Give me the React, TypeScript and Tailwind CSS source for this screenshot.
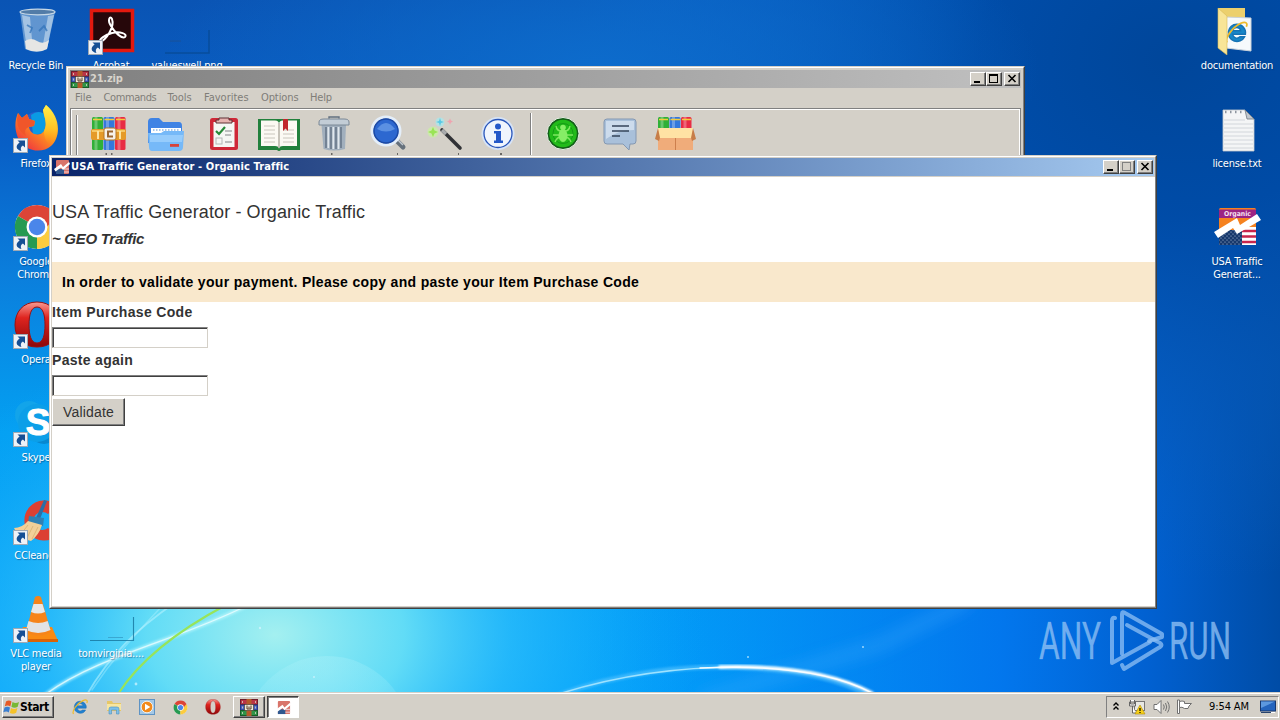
import type { ReactNode } from 'react';
import clsx from 'clsx';

const raised = 'border border-t-white border-l-white border-r-[#404040] border-b-[#404040]';

/* ---------- Wallpaper ---------- */

const Wallpaper = () => (
  <svg className="absolute inset-0" width="1280" height="720" viewBox="0 0 1280 720">
    <defs>
      <linearGradient id="sky" x1="0" y1="0" x2="0" y2="1">
        <stop offset="0" stopColor="#0a54b4" />
        <stop offset="0.2" stopColor="#085fc6" />
        <stop offset="0.38" stopColor="#0b7edc" />
        <stop offset="0.6" stopColor="#03a0f2" />
        <stop offset="0.96" stopColor="#02a4fb" />
      </linearGradient>
      <linearGradient id="right" x1="0" y1="0" x2="1" y2="0">
        <stop offset="0.45" stopColor="#0478f0" stopOpacity="0" />
        <stop offset="0.78" stopColor="#0272ec" stopOpacity="0.9" />
        <stop offset="0.9" stopColor="#0160d0" />
        <stop offset="1" stopColor="#004ca6" />
      </linearGradient>
      <radialGradient id="top" cx="0" cy="0" r="1" gradientUnits="userSpaceOnUse" gradientTransform="translate(1170 60) scale(640 520)">
        <stop offset="0" stopColor="#00469a" />
        <stop offset="0.3" stopColor="#004ba6" stopOpacity="0.96" />
        <stop offset="0.6" stopColor="#0556b4" stopOpacity="0.7" />
        <stop offset="1" stopColor="#0a60c0" stopOpacity="0" />
      </radialGradient>
      <radialGradient id="topglow" cx="0" cy="0" r="1" gradientUnits="userSpaceOnUse" gradientTransform="translate(600 70) scale(440 180)">
        <stop offset="0" stopColor="#0d6ccc" />
        <stop offset="1" stopColor="#0d6ccc" stopOpacity="0" />
      </radialGradient>
      <radialGradient id="glow" cx="0" cy="0" r="1" gradientUnits="userSpaceOnUse" gradientTransform="translate(275 635) scale(430 300)">
        <stop offset="0" stopColor="#a4f0f0" />
        <stop offset="0.3" stopColor="#6ce2f6" stopOpacity="0.9" />
        <stop offset="0.55" stopColor="#38c4fb" stopOpacity="0.6" />
        <stop offset="1" stopColor="#10a4fa" stopOpacity="0" />
      </radialGradient>
      <radialGradient id="bubble" cx="0.5" cy="0.1" r="0.8">
        <stop offset="0" stopColor="#b8f4fc" stopOpacity="0.3" />
        <stop offset="1" stopColor="#b8f4fc" stopOpacity="0.05" />
      </radialGradient>
      <filter id="soft">
        <feGaussianBlur stdDeviation="1.2" />
      </filter>
      <filter id="softer">
        <feGaussianBlur stdDeviation="7" />
      </filter>
    </defs>
    <rect width="1280" height="720" fill="url(#sky)" />
    <rect width="1280" height="720" fill="url(#right)" />
    <rect width="1280" height="720" fill="url(#top)" />
    <rect width="1280" height="300" fill="url(#topglow)" />
    <rect y="330" width="800" height="390" fill="url(#glow)" />
    <circle cx="327" cy="740" r="84" fill="url(#bubble)" />
    <path d="M970 600 L880 645 L700 700" fill="none" stroke="#4ab4ff" strokeOpacity="0.25" strokeWidth="14" filter="url(#softer)" />
    <g fill="none" strokeLinecap="round">
      <path d="M46 694 C100 655 180 640 250 604" stroke="#c8fbff" strokeOpacity="0.6" strokeWidth="4" filter="url(#soft)" />
      <path d="M46 694 C100 655 180 640 250 604" stroke="#effeff" strokeOpacity="0.75" strokeWidth="1.4" />
      <path d="M86 696 C110 655 135 630 176 602" stroke="#b4f2ff" strokeOpacity="0.6" strokeWidth="1.8" />
      <path d="M92 690 C112 660 130 640 164 604" stroke="#b4f2ff" strokeOpacity="0.4" strokeWidth="1.5" />
      <path d="M118 694 C140 660 175 632 226 605" stroke="#98e458" strokeWidth="2.2" />
      <path d="M556 696 C620 672 690 664 750 668 C800 670 840 680 866 694" stroke="#58c4ff" strokeOpacity="0.6" strokeWidth="5" filter="url(#soft)" />
      <path d="M562 693 C620 675 680 667 740 667" stroke="#9de2ff" strokeWidth="1.4" />
      <path d="M720 667 C790 665 840 676 872 693" stroke="#f2fcff" strokeWidth="3.4" filter="url(#soft)" />
      <path d="M700 668 C790 664 840 676 872 693" stroke="#ffffff" strokeOpacity="0.9" strokeWidth="1.3" />
    </g>
    <g fill="#d8f6ff" fillOpacity="0.7">
      <circle cx="136" cy="684" r="1.4" />
      <circle cx="260" cy="628" r="1.2" />
      <circle cx="314" cy="677" r="1" />
      <circle cx="748" cy="657" r="1" />
      <circle cx="863" cy="647" r="1" />
    </g>
  </svg>
);

const AnyRun = () => (
  <svg className="absolute left-[1030px] top-[600px] overflow-visible" width="220" height="84" viewBox="1030 600 220 84">
    <g fill="#8fc0f4" fillOpacity="0.78" stroke="#8fc0f4" strokeOpacity="0.5" strokeWidth="0.5" fontFamily="Roboto, Liberation Sans, sans-serif" fontSize="52">
      <text x="1039" y="659" textLength="62" lengthAdjust="spacingAndGlyphs">ANY</text>
      <text x="1169" y="659" textLength="62" lengthAdjust="spacingAndGlyphs">RUN</text>
    </g>
    <g fill="none" stroke="#8fc0f4" strokeOpacity="0.75" strokeWidth="4" strokeLinecap="round" strokeLinejoin="round">
      <path d="M1115 618 Q1112 617 1112 621 V663 L1150 642" />
      <path d="M1122 654 V614 Q1122 611 1125 613 L1162 634 V637 L1149 641" />
      <path d="M1127 625 L1160 643 Q1163 645 1160 647 L1124 669 L1122 665" />
    </g>
  </svg>
);

/* ---------- Icons ---------- */

const Shortcut = () => (
  <svg className="absolute bottom-0 left-0" width="15" height="15" viewBox="0 0 15 15">
    <rect x="0.5" y="0.5" width="14" height="14" fill="#eef2f7" stroke="#9fa9b4" />
    <path d="M4.5 2.5 H12 V9.5 L9.9 7.6 C7.8 8.8 7.2 10.4 8.4 13 C3 12 2 7.8 6.6 4.6 Z" fill="#164f94" />
  </svg>
);

const BinIcon = () => (
  <svg width="48" height="48" viewBox="0 0 48 48">
    <path d="M7 5 L12 42 Q24 48 34 42 L42 5 Z" fill="#86b0da" fillOpacity="0.7" />
    <path d="M9 8 L14 42 L20 44 L17 10 Z" fill="#e7f1f8" fillOpacity="0.5" />
    <path d="M35 9 L29 43 L34 41 L41 8 Z" fill="#d6e6f3" fillOpacity="0.55" />
    <path d="M12 34 Q18 30 24 34 T36 33 L34 42 Q24 47 13 42 Z" fill="#e6e6e4" />
    <path d="M14 18 l5 3 l-2 5 M26 24 l5 -5 l3 5" stroke="#2d70b8" strokeOpacity="0.7" strokeWidth="1.8" fill="none" />
    <ellipse cx="24.5" cy="5" rx="17.5" ry="2.8" fill="#527ca8" stroke="#c7d8e6" strokeWidth="1.2" />
  </svg>
);

const AcrobatIcon = () => (
  <svg width="48" height="48" viewBox="0 0 48 48">
    <rect x="3.5" y="3.5" width="41" height="40" fill="#26070a" stroke="#e2190f" strokeWidth="3.5" />
    <path
      d="M12 35 C18 33 27 20 24 12 C22 8 19 13 23 19 C27 26 34 32 37 30 C40 27 32 24 24 26 C17 28 11 32 12 35 Z"
      fill="none"
      stroke="#fff"
      strokeWidth="2"
    />
  </svg>
);

const FirefoxIcon = () => (
  <svg width="48" height="48" viewBox="0 0 48 48">
    <defs>
      <linearGradient id="ff" x1="0.9" y1="0" x2="0.1" y2="1">
        <stop offset="0" stopColor="#ffe63a" />
        <stop offset="0.45" stopColor="#ff9a1b" />
        <stop offset="1" stopColor="#ec2048" />
      </linearGradient>
      <linearGradient id="fftail" x1="0" y1="0" x2="0" y2="1">
        <stop offset="0" stopColor="#fff04a" />
        <stop offset="0.6" stopColor="#ffc524" stopOpacity="0.9" />
        <stop offset="1" stopColor="#ff9a1b" stopOpacity="0" />
      </linearGradient>
    </defs>
    <circle cx="24" cy="22" r="15" fill="#2a5fcb" />
    <path d="M18 10 Q27 3 34 12 L31 28 L20 30 Z" fill="#0a9be4" />
    <path
      d="M5 8 L9 13 L14 9 L16 14 L22 16 L21 21 L16 22 C17 30 27 32 31 26 C35 18 31 12 30 5 L33 0 C48 12 48 32 38 41 C28 50 10 45 5 33 C1 23 2 15 5 8 Z"
      fill="url(#ff)"
    />
    <path d="M33 0 C46 12 47 28 38 40 C33 38 31 32 31 26 C35 18 31 12 30 5 Z" fill="url(#fftail)" />
    <path d="M5 8 L9 13 L14 9 L16 14 L22 16 L21 21 L16 22 Q10 24 13 31 Q4 26 4 14 Z" fill="#f0562a" />
  </svg>
);

const ChromeIcon = ({ size = 48 }: { size?: number }) => (
  <svg width={size} height={size} viewBox="0 0 48 48">
    <circle cx="24" cy="24" r="22" fill="#fff" />
    <path d="M24 24 L4.9 13 A22 22 0 0 1 43.1 13 Z" fill="#dc4437" />
    <path d="M24 24 L4.9 13 A22 22 0 0 0 24 46 Z" fill="#269a52" />
    <path d="M24 24 L43.1 13 A22 22 0 0 1 24 46 Z" fill="#fccc3f" />
    <path d="M24 13 H43.1 L33 25 Z" fill="#dc4437" />
    <path d="M24 46 L34 29 L25 34 Z" fill="#fccc3f" />
    <circle cx="24" cy="24" r="10.5" fill="#fff" />
    <circle cx="24" cy="24" r="8.2" fill="#4a86ea" />
  </svg>
);

const OperaIcon = ({ size = 48 }: { size?: number }) => (
  <svg width={size} height={size} viewBox="0 0 48 48">
    <defs>
      <linearGradient id="op" x1="0" y1="0" x2="0" y2="1">
        <stop offset="0" stopColor="#f79a92" />
        <stop offset="0.35" stopColor="#df241f" />
        <stop offset="1" stopColor="#8c0709" />
      </linearGradient>
    </defs>
    <path
      d="M24 1 C10 1 2 11 2 24 C2 38 11 46 24 46 C37 46 46 38 46 24 C46 11 38 1 24 1 Z M24 6 C30 6 32 14 32 24 C32 34 30 42 24 42 C18 42 16 34 16 24 C16 14 18 6 24 6 Z"
      fill="url(#op)"
      fillRule="evenodd"
      stroke="#991112"
    />
  </svg>
);

const SkypeIcon = () => (
  <svg width="48" height="48" viewBox="0 0 48 48">
    <circle cx="16" cy="16" r="14" fill="#12a4ea" />
    <circle cx="31" cy="30" r="15" fill="#0788d0" />
    <circle cx="24" cy="24" r="19" fill="#0c9fe8" />
    <text x="25" y="36" textAnchor="middle" fontFamily="Liberation Sans, sans-serif" fontWeight="bold" fontSize="37" fill="#fff" stroke="#fff">S</text>
  </svg>
);

const CCleanerIcon = () => (
  <svg width="48" height="48" viewBox="0 0 48 48">
    <path d="M44 8 A20 20 0 1 0 44 39 L35 31 A9 9 0 1 1 35 17 Z" fill="#dc4033" />
    <path d="M31 3 L34 4 L27 22 L23 21 Z" fill="#2a6fa8" />
    <path d="M16 19 L31 21 L30 29 L15 27 Z" fill="#2f80b4" />
    <path d="M15 24 L29 28 Q26 38 18 44 Q5 42 1 31 Q9 31 15 24 Z" fill="#f2cf98" />
    <path d="M15 28 L8 37 M20 29 L14 41 M25 30 L19 42" stroke="#d9ae70" strokeWidth="0.8" />
  </svg>
);

const VlcIcon = () => (
  <svg width="48" height="48" viewBox="0 0 48 48">
    <path d="M10 32 H39 L45 46 H4 Z" fill="#f98a12" />
    <path d="M4 44 H45 L45 47 H4 Z" fill="#d96307" />
    <path d="M22 2 Q25 0 28 2 L38 37 Q25 44 13 37 Z" fill="#f6841a" />
    <path d="M20.5 9 H29.5 L32 17 Q25 20 18 17 Z" fill="#e8e8e8" />
    <path d="M15.5 26 Q25 30 34.7 26 L37.5 35 Q25 41 13 35 Z" fill="#e2e3e4" />
  </svg>
);

const IeIcon = ({ size = 16 }: { size?: number }) => (
  <svg width={size} height={size} viewBox="0 0 16 16">
    <path d="M8.2 2.2 A6 6 0 1 0 13.6 11 H10.4 A3 3 0 0 1 5.3 9.2 H14.2 A6 6 0 0 0 8.2 2.2 Z M5.4 6.8 A2.8 2.8 0 0 1 10.9 6.8 Z" fill="#2181cf" stroke="#1a6ab4" strokeWidth="0.5" fillRule="evenodd" />
    <path d="M1.5 15 C-0.5 12 5 4.5 11 1.6 C14.5 0 16 1.6 14.8 4" fill="none" stroke="#eebb2b" strokeWidth="1.2" />
  </svg>
);

const DocumentationIcon = () => (
  <svg width="48" height="48" viewBox="0 0 48 48">
    <path d="M4 1 H31 V40 H4 Z" fill="#ecd06d" />
    <path d="M12 10 L37 11 V44 L12 41 Z" fill="#f6fafc" stroke="#c9d2da" />
    <svg x="11" y="14" width="23" height="23" viewBox="0 0 16 16">
      <path d="M8.2 2.2 A6 6 0 1 0 13.6 11 H10.4 A3 3 0 0 1 5.3 9.2 H14.2 A6 6 0 0 0 8.2 2.2 Z M5.4 6.8 A2.8 2.8 0 0 1 10.9 6.8 Z" fill="#1687c8" stroke="#1673b4" fillRule="evenodd" />
      <path d="M1.5 15 C-0.5 12 5 4.5 11 1.6 C14.5 0 16 1.6 14.8 4" fill="none" stroke="#eebb2b" strokeWidth="1.2" />
    </svg>
    <path d="M4 1 L13 9 V48 L4 41 Z" fill="#f8e597" stroke="#d9b955" strokeWidth="0.6" />
  </svg>
);

const TextFileIcon = () => (
  <svg width="48" height="48" viewBox="0 0 48 48">
    <path d="M9 5 H31 L40 14 V46 H9 Z" fill="#f4f5f6" stroke="#c4c9cf" strokeWidth="0.8" />
    <path d="M31 5 L33 14 H40 Z" fill="#c2c8cf" stroke="#6f7782" strokeWidth="0.8" />
    <path d="M10 15 H31 M10 19 H39 M10 23 H39 M10 27 H39 M10 31 H39 M10 35 H39 M10 39 H39 M10 43 H39" stroke="#d2d6db" />
    <path d="M11 7 H30" stroke="#8e969f" strokeWidth="2.5" strokeDasharray="1.5 3.5" />
  </svg>
);

const OrganicIcon = () => (
  <svg width="48" height="48" viewBox="0 0 48 48">
    <defs>
      <pattern id="stars" width="4" height="4" patternUnits="userSpaceOnUse">
        <rect width="4" height="4" fill="#17386c" />
        <circle cx="1" cy="1" r="0.6" fill="#b9cbe2" />
        <circle cx="3" cy="3" r="0.6" fill="#b9cbe2" />
      </pattern>
    </defs>
    <rect x="5" y="5" width="37" height="26" rx="1.5" fill="#f58220" />
    <rect x="5" y="6.5" width="37" height="8.5" fill="#9c2383" />
    <rect x="5" y="27" width="23" height="15" fill="url(#stars)" />
    <rect x="28" y="24" width="14" height="18" fill="#fff" />
    <path d="M28 28 H42 M28 33.5 H42 M28 39 H42" stroke="#c8254c" strokeWidth="2.4" />
    <path d="M0 29 L23 15 L26 22 L43 11 L47 17 L23 31 L19 25 L4 35 Z" fill="#fff" />
    <text x="10" y="13.3" fontFamily="DejaVu Sans, sans-serif" fontWeight="bold" fontSize="6.8" textLength="27" lengthAdjust="spacingAndGlyphs" fill="#f6e2f2">Organic</text>
  </svg>
);

const TrafficIcon = ({ size = 16 }: { size?: number }) => (
  <svg width={size} height={size} viewBox="0 0 16 16">
    <rect x="2" y="1" width="13" height="14" rx="1" fill="#d9746a" />
    <rect x="2" y="10" width="8" height="5" fill="#31588f" />
    <path d="M10 10 H15 M10 13 H15" stroke="#f1d6da" />
    <path d="M0 10 L7 5 L9 8 L15 3 L16 5 L9 11 L7 8.5 L1.5 12.5 Z" fill="#fff" />
  </svg>
);

const ValueswellIcon = () => (
  <svg width="48" height="48" viewBox="0 0 48 48">
    <path d="M1 46 H45 V23" fill="none" stroke="#084a94" strokeOpacity="0.8" strokeWidth="1.5" />
    <path d="M6 34 H17" stroke="#244f80" strokeOpacity="0.6" />
  </svg>
);

const TomIcon = () => (
  <svg width="48" height="48" viewBox="0 0 48 48">
    <path d="M2 45.5 H45.5 V22" fill="none" stroke="#15749c" strokeOpacity="0.8" strokeWidth="1.1" />
    <path d="M20 42.5 H35" stroke="#3aa8d2" />
  </svg>
);

const RarIcon = () => (
  <svg width="18" height="17" viewBox="0 0 18 17">
    <rect x="0.5" y="0.5" width="17" height="5" fill="#b83446" stroke="#6e1c2a" />
    <rect x="0.5" y="6" width="17" height="5" fill="#4560c0" stroke="#263684" />
    <rect x="0.5" y="11.5" width="17" height="5" fill="#2f9448" stroke="#185c28" />
    <rect x="6.5" y="0" width="5" height="17" fill="#b65a2a" />
    <rect x="4.5" y="5.5" width="9" height="6" fill="#ede8d8" stroke="#403020" strokeWidth="0.6" />
    <path d="M7 6.5 V10 H11 V6.5 M9 7.5 V9.5" stroke="#5a3b24" fill="none" />
    <path d="M2.5 2 V15 M15.5 2 V15" stroke="#d8d4c4" strokeOpacity="0.8" strokeDasharray="2 3.5" />
  </svg>
);

/* ---------- WinRAR toolbar ---------- */

const Books = ({ y = 4, h = 33 }: { y?: number; h?: number }) => (
  <>
    <rect x="3" y={y} width="11" height={h} rx="1.5" fill="#30b038" />
    <rect x="14.5" y={y} width="11" height={h} rx="1.5" fill="#3478dc" />
    <rect x="26" y={y} width="10.5" height={h} rx="1.5" fill="#e82c44" />
    <path d={`M7 ${y} V${y + h} M18.5 ${y} V${y + h} M30 ${y} V${y + h}`} stroke="#fff" strokeOpacity="0.28" strokeWidth="3" />
    <path d={`M4 ${y + 2.5} H13 M15.5 ${y + 2.5} H25 M27 ${y + 2.5} H36`} stroke="#f4cc3c" strokeWidth="1.6" />
  </>
);

const tools: { name: string; className: string; icon: ReactNode }[] = [
  {
    name: 'add',
    className: 'ml-[11px]',
    icon: (
      <>
        <Books />
        <rect x="2" y="16" width="35" height="11" rx="2" fill="#e59a28" />
        <path d="M3 18 H36" stroke="#fbd778" strokeWidth="1.6" />
        <path d="M9 18 V26 M31 18 V26" stroke="#fbe3a0" strokeWidth="2" />
        <rect x="15" y="15" width="12" height="12" rx="2" fill="#f6f2ea" stroke="#b67725" />
        <path d="M24 18.5 H19 V23.5 H24" fill="none" stroke="#9b6630" strokeWidth="2" />
        <path d="M16.5 41 H18 M22 41 H23.5" stroke="#000" />
      </>
    ),
  },
  {
    name: 'extract',
    className: 'ml-[17px]',
    icon: (
      <>
        <path d="M2 9 Q2 5 6 5 H13 L17 9 H33 Q36 9 36 13 V30 H2 Z" fill="#3f83e4" />
        <path d="M5 15 H35 V22 H5 Z" fill="#fff" />
        <path d="M7 17 H34" stroke="#a8c8ea" strokeWidth="2" strokeDasharray="1.5 1.5" />
        <path d="M2 20 H15 L18 18 H38 L37 34 Q37 38 33 38 H6 Q3 38 3 34 Z" fill="#76b9f8" />
        <path d="M4 22 H37 L36 29 H4 Z" fill="#a4d4fd" fillOpacity="0.7" />
        <rect x="24" y="31" width="9" height="2.8" fill="#d8433a" />
      </>
    ),
  },
  {
    name: 'test',
    className: 'ml-[18px]',
    icon: (
      <>
        <rect x="6" y="5" width="28" height="32" rx="2.5" fill="#cf2838" />
        <rect x="9.5" y="9" width="21" height="25" fill="#f5f7f4" />
        <path d="M12 10 V7 H15 V5 H25 V7 H28 V10 Z" fill="#e6b3b0" stroke="#5f3035" />
        <path d="M12 18 L15 21 L21 14" fill="none" stroke="#268a38" strokeWidth="2.2" />
        <path d="M21 18 H28 M21 22 H27 M21 29 H28" stroke="#a9adad" strokeWidth="1.3" />
        <rect x="12" y="25" width="6" height="6" fill="none" stroke="#b4b8b8" />
      </>
    ),
  },
  {
    name: 'view',
    className: 'ml-[15px]',
    icon: (
      <>
        <path d="M-1 6 H41 V37 H22 Q20 39 18 37 H-1 Z" fill="#21803c" />
        <path d="M2 7.5 H16 Q20 7.5 20 11 Q20 7.5 24 7.5 H38 V33 H24 Q20 33 20 36 Q20 33 16 33 H2 Z" fill="#fbf9f3" />
        <path d="M20 10 V35" stroke="#b9b5aa" strokeWidth="1.6" />
        <path d="M5 13 H16 M5 17 H16 M5 21 H16 M5 25 H16 M5 29 H16 M24 17 H35 M24 21 H35 M24 25 H35 M24 29 H35" stroke="#c9c6bd" />
        <path d="M24 6 H29 V18 L26.5 15.5 L24 18 Z" fill="#c1272d" />
      </>
    ),
  },
  {
    name: 'delete',
    className: 'ml-[15px]',
    icon: (
      <>
        <path d="M7.5 12 H32 L31 36 Q20 39 9.5 36 Z" fill="#a1afbd" />
        <path d="M12 14 V35 M17 14 V36 M22 14 V36 M27 14 V35" stroke="#617183" strokeWidth="1.4" />
        <path d="M14.3 14 V35 M19.3 14 V36 M24.5 14 V36" stroke="#e0e7ed" strokeWidth="1.6" />
        <path d="M5 9 Q5 6 10 6 H30 Q35 6 35 9 V12 H5 Z" fill="#c3cdd6" stroke="#7b8896" />
        <path d="M15 5.5 V4 H25 V5.5" fill="none" stroke="#627080" strokeWidth="1.4" />
        <path d="M17 41 H18.5" stroke="#000" />
      </>
    ),
  },
  {
    name: 'find',
    className: 'ml-[14px]',
    icon: (
      <>
        <path d="M28 27 L35 34" stroke="#66717c" strokeWidth="5" strokeLinecap="round" />
        <path d="M28 25 L35 32" stroke="#c0c8d0" strokeWidth="1.5" />
        <circle cx="18" cy="18" r="14" fill="#2d68d0" stroke="#e4eef9" strokeWidth="3" />
        <circle cx="18" cy="18" r="12" fill="none" stroke="#1d4aa4" strokeWidth="1.4" />
        <path d="M9 16 Q18 4 27 16 Q18 21 9 16 Z" fill="#79abef" fillOpacity="0.6" />
        <path d="M29 41 H30" stroke="#000" />
      </>
    ),
  },
  {
    name: 'wizard',
    className: 'ml-[18px]',
    icon: (
      <>
        <path d="M16 17 L34 35" stroke="#303236" strokeWidth="3.6" strokeLinecap="round" />
        <path d="M16 17 L20 21" stroke="#a9abad" strokeWidth="3.4" />
        <circle cx="7" cy="19" r="5.5" fill="#c7f49c" fillOpacity="0.7" />
        <path d="M7 14 L8.5 17.5 L12 19 L8.5 20.5 L7 24 L5.5 20.5 L2 19 L5.5 17.5 Z" fill="#9ae456" />
        <circle cx="14" cy="9" r="4.5" fill="#a5e9f0" fillOpacity="0.7" />
        <path d="M14 5 L15 8 L18 9 L15 10 L14 13 L13 10 L10 9 L13 8 Z" fill="#58c8e4" />
        <path d="M24 5.5 L25 7.5 L27 8.5 L25 9.5 L24 11.5 L23 9.5 L21 8.5 L23 7.5 Z" fill="#efa4b0" />
        <path d="M32 41 H33" stroke="#000" />
      </>
    ),
  },
  {
    name: 'info',
    className: 'ml-[12px]',
    icon: (
      <>
        <circle cx="20" cy="20.5" r="16.5" fill="#d6e3f6" />
        <circle cx="20" cy="20.5" r="14" fill="#f0f5fd" stroke="#2855ba" strokeWidth="1.3" />
        <circle cx="20" cy="13.5" r="3" fill="#2458c8" />
        <path d="M16 18 H23 V27.5 H25 V30 H16 V27.5 H18 V20.5 H16 Z" fill="#2458c8" />
        <path d="M22 41 H24" stroke="#000" />
      </>
    ),
  },
  {
    name: 'scan',
    className: 'ml-[11px]',
    icon: (
      <>
        <circle cx="20" cy="20.5" r="16" fill="#155e1a" stroke="#e9eee6" />
        <circle cx="20" cy="20.5" r="13.8" fill="#22bb1a" />
        <circle cx="20" cy="20.5" r="10" fill="none" stroke="#159a16" />
        <path d="M13 13 Q14 18 18 18 M27 13 Q26 18 22 18 M10 22 H30 M12 29 Q14 24 18 24 M28 29 Q26 24 22 24" fill="none" stroke="#7fe860" strokeWidth="1.4" />
        <ellipse cx="20" cy="22.5" rx="4.5" ry="6.5" fill="#86ee66" />
        <circle cx="20" cy="14.5" r="2.8" fill="#86ee66" />
      </>
    ),
  },
  {
    name: 'comment',
    className: 'ml-[17px]',
    icon: (
      <>
        <path d="M7 6 H33 Q36 6 36 9 V28 Q36 31 33 31 H30 L29 37 L23 31 H7 Q4 31 4 28 V9 Q4 6 7 6 Z" fill="#a9c0da" stroke="#8498b2" />
        <path d="M6 8 H34 V17 Q18 17 6 26 Z" fill="#dbe7f3" fillOpacity="0.7" />
        <path d="M12 13 H29 M12 18 H29 M12 23 H20" stroke="#35445a" strokeWidth="1.5" />
      </>
    ),
  },
  {
    name: 'sfx',
    className: 'ml-[15px]',
    icon: (
      <>
        <Books y={4} h={14} />
        <path d="M3 16 H38 V37 H3 Z" fill="#f0ac7a" />
        <path d="M3 15 L0 26 L4 28 L7 18 M38 15 L41 26 L37 28 L34 18" fill="#c77d48" />
        <path d="M3 15 H38 L36 25 H5 Z" fill="#ffe2a4" />
        <path d="M20.5 25 V37" stroke="#cd7f4d" />
      </>
    ),
  },
];

/* ---------- Window parts ---------- */

const CaptionButton = ({ kind, disabled = false }: { kind: 'min' | 'max' | 'close'; disabled?: boolean }) => (
  <button className={clsx('h-[14px] w-4 bg-[#d4d0c8] shadow-[inset_-1px_-1px_0_#808080]', raised, kind === 'close' && 'ml-0.5')}>
    <svg width="14" height="12" viewBox="0 0 14 12" shapeRendering="crispEdges">
      {kind === 'min' && <path d="M3 9 H9" stroke="#000" strokeWidth="2" />}
      {kind === 'max' && (
        <g fill="none" stroke={disabled ? '#808080' : '#000'}>
          <path d="M2 1.5 H11" strokeWidth={disabled ? 1 : 2} />
          <rect x="2.5" y="1.5" width="8" height="8" />
        </g>
      )}
      {kind === 'close' && <path d="M3.5 2 L10.5 9 M10.5 2 L3.5 9" stroke="#000" strokeWidth="1.6" shapeRendering="auto" />}
    </svg>
  </button>
);

const TitleBar = ({ icon, title, className, disabled }: { icon: ReactNode; title: string; className: string; disabled?: boolean }) => (
  <div className={clsx('flex h-[18px] items-center bg-linear-to-r pr-px text-[11px] font-bold', className)}>
    {icon}
    <span className="flex-1 whitespace-nowrap leading-[18px]">{title}</span>
    <CaptionButton kind="min" />
    <CaptionButton kind="max" disabled={disabled} />
    <CaptionButton kind="close" />
  </div>
);

const menu = [
  { label: 'File', className: 'w-[28.5px]' },
  { label: 'Commands', className: 'w-16 tracking-[-0.4px]' },
  { label: 'Tools', className: 'w-[36.5px]' },
  { label: 'Favorites', className: 'w-[57px]' },
  { label: 'Options', className: 'w-[49px] tracking-[-0.1px]' },
  { label: 'Help', className: 'w-8 tracking-[-0.2px]' },
];

const ArchiveWindow = () => (
  <div className="absolute left-[66px] top-[66px] h-[400px] w-[959px] border border-[#d4d0c8] border-r-[#404040] bg-[#d4d0c8]">
    <div className="h-full border border-white border-r-[#808080] p-0.5">
      <TitleBar
        icon={<span className="pl-px pr-px"><RarIcon /></span>}
        title="21.zip"
        className="from-[#808080] to-[#c0c0c0] tracking-[-0.2px] text-[#d8d4cc]"
      />
      <div className="flex h-5 items-center pl-[5px] text-[11px] text-[#7f7d78]">
        {menu.map((m) => (
          <span key={m.label} className={m.className}>{m.label}</span>
        ))}
      </div>
      <div className="h-[280px] border border-[#808080] shadow-[inset_1px_1px_0_#fff,inset_-1px_0_0_#fff]">
        <div className="flex h-[46px] items-start pl-[5px] pt-1">
          <div className="mt-0.5 h-10 w-0.5 border-l border-[#808080] bg-white" />
          {tools.map((tool) => (
            <div key={tool.name} className="flex">
              {tool.name === 'scan' && <div className="ml-3 h-11 w-0.5 border-l border-[#808080] bg-white" />}
              <svg className={clsx('overflow-visible', tool.className)} width="40" height="40" viewBox="0 0 40 40">{tool.icon}</svg>
            </div>
          ))}
        </div>
      </div>
    </div>
  </div>
);

const CodeInput = () => (
  <input className="block h-[21px] w-[156px] border border-[#d4d0c8] border-l-[#808080] border-t-[#808080] bg-white shadow-[inset_1px_1px_0_#404040] outline-none" />
);

const TrafficWindow = () => (
  <div className="absolute left-[49px] top-[155px] h-[454px] w-[1108px] border border-[#d4d0c8] border-b-[#404040] border-r-[#404040]">
    <div className="flex h-full flex-col border border-b-[#808080] border-l-white border-r-[#808080] border-t-white bg-[#d4d0c8] p-px">
      <TitleBar
        icon={<span className="pl-0.5 pr-px"><TrafficIcon /></span>}
        title="USA Traffic Generator - Organic Traffic"
        className="from-[#0a246a] to-[#a6caf0] tracking-[0.11px] text-white"
        disabled
      />
      <div className="-mr-px mt-px flex-1 bg-white font-['Liberation_Sans',Arial,sans-serif] text-[14px] text-[#333]">
        <h1 className="pt-[23px] text-[18px] leading-6 tracking-[0.12px] text-[#333]">USA Traffic Generator - Organic Traffic</h1>
        <h2 className="mt-[5px] text-[15px] font-bold italic leading-5 tracking-[-0.28px]">~ GEO Traffic</h2>
        <div className="mt-[13px] flex h-10 items-center bg-[#f9e8cc] pl-2.5 font-bold tracking-[0.32px] text-black">
          In order to validate your payment. Please copy and paste your Item Purchase Code
        </div>
        <label className="block h-[25px] font-bold leading-5 tracking-[0.33px]">Item Purchase Code</label>
        <CodeInput />
        <label className="block h-[27px] pt-0.5 font-bold leading-5 tracking-[0.3px]">Paste again</label>
        <CodeInput />
        <button className={clsx('mt-0.5 block h-7 w-[73px] bg-[#d4d0c8] tracking-[0.2px] shadow-[inset_-1px_-1px_0_#808080]', raised)}>Validate</button>
      </div>
    </div>
  </div>
);

/* ---------- Desktop ---------- */

type Item = { label: string; icon: ReactNode; shortcut?: boolean };

const DesktopIcon = ({ label, icon, shortcut }: Item) => (
  <div className="flex h-[98px] w-20 flex-col items-center pt-[7px]">
    <div className="relative ml-0.5 h-12 w-12">
      {icon}
      {shortcut && <Shortcut />}
    </div>
    <span className="mt-1 whitespace-pre text-center text-[11px] leading-[13px] tracking-[-0.2px] text-white [text-shadow:1px_1px_1px_#00306080]">{label}</span>
  </div>
);

const leftIcons: Item[] = [
  { label: 'Recycle Bin', icon: <BinIcon /> },
  { label: 'Firefox', icon: <FirefoxIcon />, shortcut: true },
  { label: 'Google\nChrome', icon: <ChromeIcon />, shortcut: true },
  { label: 'Opera', icon: <OperaIcon />, shortcut: true },
  { label: 'Skype', icon: <SkypeIcon />, shortcut: true },
  { label: 'CCleaner', icon: <CCleanerIcon />, shortcut: true },
  { label: 'VLC media\nplayer', icon: <VlcIcon />, shortcut: true },
];

const rightIcons: Item[] = [
  { label: 'documentation', icon: <DocumentationIcon /> },
  { label: 'license.txt', icon: <TextFileIcon /> },
  { label: 'USA Traffic\nGenerat...', icon: <OrganicIcon /> },
];

/* ---------- Taskbar ---------- */

const ExplorerIcon = () => (
  <svg width="16" height="16" viewBox="0 0 16 16">
    <path d="M1 2 H6 L7 4 H15 V12 H1 Z" fill="#e7c766" />
    <path d="M1 5 H15 V11 H1 Z" fill="#f8e6a0" />
    <path d="M3 15 V10 Q3 8 5 8 H11 Q13 8 13 10 V15 H10.5 V11 H5.5 V15 Z" fill="#7fc0e8" stroke="#4a90c0" strokeWidth="0.6" />
  </svg>
);

const MediaIcon = () => (
  <svg width="16" height="16" viewBox="0 0 16 16">
    <rect x="0.5" y="0.5" width="15" height="15" fill="#a4c8e6" stroke="#5e93c4" />
    <circle cx="8" cy="8" r="5.8" fill="#f28a1c" stroke="#fff" strokeWidth="0.8" />
    <path d="M6 4.8 L11.3 8 L6 11.2 Z" fill="#fff" />
  </svg>
);

const WindowsFlag = () => (
  <svg width="17" height="16" viewBox="0 0 17 16">
    <path d="M3 2.5 Q6 0.5 8.5 2.5 L7.3 7.5 Q5 5.6 1.8 7.3 Z" fill="#e85a24" />
    <path d="M9.5 3 Q12.5 4.8 16 3 L14.7 7.8 Q11.5 9.6 8.4 7.8 Z" fill="#78b833" />
    <path d="M1.5 8.4 Q4.5 6.8 7 8.6 L5.8 13.4 Q3.5 11.8 0.3 13.3 Z" fill="#3b7fd0" />
    <path d="M8 9 Q11 10.8 14.4 9 L13.2 13.8 Q10 15.6 6.9 13.9 Z" fill="#f5c228" />
  </svg>
);

const Tray = () => (
  <div className="mr-px flex h-[22px] w-[173px] items-center border border-[#808080] border-b-white border-r-white pl-1.5 text-[11px] text-black">
    <svg width="6" height="10" viewBox="0 0 6 10" fill="none" stroke="#000" strokeWidth="1.4">
      <path d="M0.5 3.5 L3 1 L5.5 3.5 M0.5 7.5 L3 5 L5.5 7.5" />
    </svg>
    <svg className="ml-2.5" width="17" height="16" viewBox="0 0 17 16">
      <rect x="5.5" y="2.5" width="10" height="9" fill="#e8e8e4" stroke="#777" />
      <path d="M1.5 1 V5 H5.5 V1 M0.5 3 H6.5 V7 H0.5 Z M3.5 7 V14 H7" fill="#fff" stroke="#666" />
      <path d="M11 6 L16 15 H6 Z" fill="#f7d018" stroke="#b08c08" strokeWidth="0.6" />
      <path d="M11 9 V12 M11 13 V14" stroke="#000" strokeWidth="1.2" />
    </svg>
    <svg className="ml-[7px]" width="17" height="16" viewBox="0 0 17 16" fill="none" stroke="#707070">
      <path d="M1 5.5 H4 L8 1.5 V14.5 L4 10.5 H1 Z" fill="#fff" />
      <path d="M10.5 5.5 Q12 8 10.5 10.5 M12.5 4 Q15 8 12.5 12 M14.5 2.5 Q18 8 14.5 13.5" />
    </svg>
    <svg className="ml-[7px]" width="17" height="16" viewBox="0 0 17 16" fill="#fff" stroke="#707070">
      <path d="M0.5 1 V14.5 H2.5 V1 Z" />
      <path d="M2.5 2.5 Q5 1.5 7.5 2.5 V4.5 H14.5 L12 7 L11 9.5 H7.5 Q5 7.5 2.5 8.5 Z" />
    </svg>
    <span className="ml-[15px] w-[51px] whitespace-nowrap tracking-[-0.1px]">9:54 AM</span>
    <svg width="16" height="14" viewBox="0 0 16 14">
      <rect x="0.5" y="1" width="15" height="10" fill="#2464bd" stroke="#17376d" />
      <path d="M1 1.5 H15 L1 8 Z" fill="#5c98df" />
      <path d="M1 12.5 H11" stroke="#27436e" />
      <path d="M11 12.5 H15" stroke="#fff" />
    </svg>
  </div>
);

const Taskbar = () => (
  <div className="absolute inset-x-0 bottom-0 h-7 border-t border-[#d4d0c8] bg-[#d4d0c8]">
    <div className="flex h-full items-start border-t border-white pl-0.5 pt-0.5">
      <button className={clsx('flex h-[22px] w-[52px] items-center whitespace-nowrap text-[12px] font-bold tracking-[-0.4px] text-black shadow-[inset_-1px_-1px_0_#808080]', raised)}>
        <WindowsFlag />
        Start
      </button>
      <div className="ml-[18px] flex h-[22px] items-center gap-[17.5px]">
        <IeIcon />
        <ExplorerIcon />
        <MediaIcon />
        <ChromeIcon size={15} />
        <OperaIcon size={16} />
      </div>
      <button className={clsx('ml-3 flex h-[22px] w-8 items-center justify-center shadow-[inset_-1px_-1px_0_#808080]', raised)}>
        <RarIcon />
      </button>
      <button className="ml-0.5 flex h-[22px] w-8 items-center justify-center border border-[#404040] border-b-white border-r-white bg-white shadow-[inset_1px_1px_0_#808080]">
        <TrafficIcon size={15} />
      </button>
      <div className="flex-1" />
      <Tray />
    </div>
  </div>
);

const App = () => {
  return (
    <div className="relative h-[720px] w-[1280px] overflow-hidden bg-[#0a6cd0] font-['DejaVu_Sans_Condensed','DejaVu_Sans',sans-serif]">
      <Wallpaper />
      <div className="absolute left-[-4px] top-0 flex flex-col">
        {leftIcons.map((item) => (
          <DesktopIcon key={item.label} {...item} />
        ))}
      </div>
      <div className="absolute left-[71px] top-0 flex">
        <DesktopIcon label="Acrobat" icon={<AcrobatIcon />} shortcut />
        <div className="-ml-1">
          <DesktopIcon label="valueswell.png" icon={<ValueswellIcon />} />
        </div>
      </div>
      <div className="absolute left-[71px] top-[588px]">
        <DesktopIcon label="tomvirginia...." icon={<TomIcon />} />
      </div>
      <div className="absolute left-[1197px] top-0 flex flex-col">
        {rightIcons.map((item) => (
          <DesktopIcon key={item.label} {...item} />
        ))}
      </div>
      <AnyRun />
      <ArchiveWindow />
      <TrafficWindow />
      <Taskbar />
    </div>
  );
};

export default App;
